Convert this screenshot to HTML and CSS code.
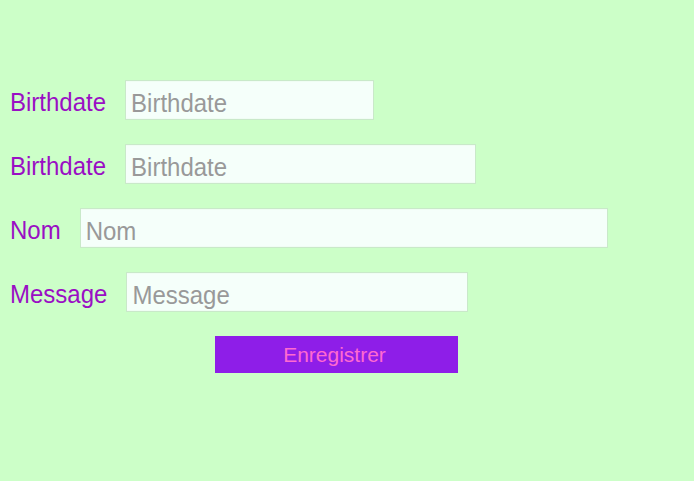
FILE: index.html
```html
<!DOCTYPE html>
<html>
<head>
<meta charset="utf-8">
<link rel="stylesheet" href="styles.css">
</head>
<body>
<form class="form">
  <div class="row">
    <label class="label">Birthdate</label>
    <input class="field w1" type="text" placeholder="Birthdate">
  </div>
  <div class="row">
    <label class="label">Birthdate</label>
    <input class="field w2" type="text" placeholder="Birthdate">
  </div>
  <div class="row">
    <label class="label">Nom</label>
    <input class="field w3" type="text" placeholder="Nom">
  </div>
  <div class="row">
    <label class="label">Message</label>
    <input class="field w4" type="text" placeholder="Message">
  </div>
  <div class="actions">
    <button class="btn" type="button">Enregistrer</button>
  </div>
</form>
</body>
</html>
```
FILE: styles.css
```css
html, body {
  margin: 0;
  padding: 0;
  background: #ccffc8;
  height: 100%;
}
body {
  font-family: "Liberation Sans", Arial, sans-serif;
}
.form {
  padding: 82px 0 0 10px;
  display: flex;
  flex-direction: column;
  gap: 28px;
}
.row {
  display: flex;
  align-items: center;
  gap: 19px;
  height: 36px;
  transform: scaleY(1.111);
  transform-origin: center;
}
.label {
  color: #9a0fc4;
  font-size: 24px;
  padding-top: 4px;
}
.field {
  box-sizing: border-box;
  height: 36px;
  margin: 0;
  padding: 5px 5px 0;
  border: 1px solid #c9e9c9;
  background: #f5fffa;
  font-family: inherit;
  font-size: 24px;
  color: #333;
  outline: none;
}
.field::placeholder {
  color: #999999;
}
.w1 { width: 249px; }
.w2 { width: 351px; }
.w3 { width: 528px; }
.w4 { width: 342px; }
.actions {
  margin-top: -2px;
  padding-left: 205px;
}
.btn {
  width: 243px;
  height: 37px;
  border: none;
  background: #8e1ee8;
  color: #ff6ad0;
  font-family: inherit;
  font-size: 21px;
  padding: 1px 4px 0 0;
}
```
